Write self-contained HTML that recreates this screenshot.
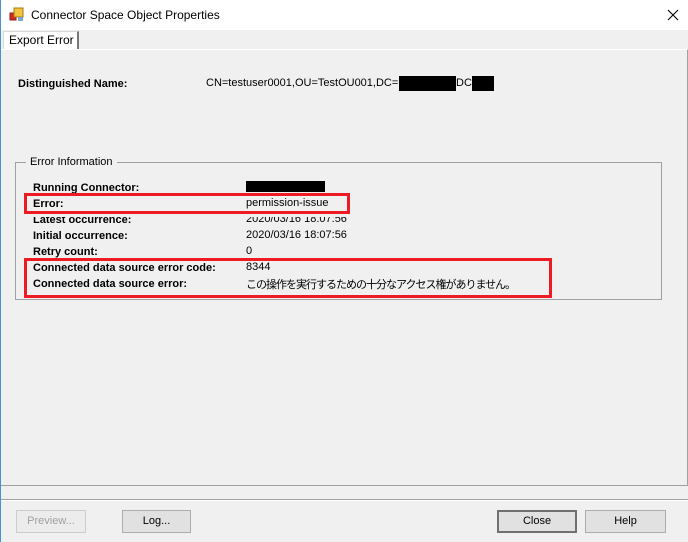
<!DOCTYPE html>
<html><head><style>
*{margin:0;padding:0;box-sizing:border-box}
body{width:688px;height:542px;background:#f0f0f0;position:relative;overflow:hidden;font-family:"Liberation Sans","Noto Sans CJK JP",sans-serif;font-size:12px;color:#000}
.a{position:absolute}
.b{font-weight:bold;font-size:11px;letter-spacing:0}
.v{font-size:11px;font-family:"Liberation Sans","Noto Sans CJK JP",sans-serif}
.btn{position:absolute;top:510px;height:23px;border:1px solid #adadad;background:#e1e1e1;text-align:center;line-height:21px;font-size:11px}
.blk{background:#000;position:absolute}
.red{position:absolute;border:3px solid #ed1c24}
</style></head><body>
<div class="a" style="left:0;top:0;width:688px;height:30px;background:#fff"></div>
<div class="a" style="left:0;top:0;width:1px;height:542px;background:#4a90d9"></div>
<svg class="a" style="left:9px;top:7px" width="16" height="16"><rect x="1" y="6" width="6" height="7" fill="#d22" stroke="#822"/><rect x="5" y="1" width="9" height="9" fill="#f3c43c" stroke="#a07a10"/><rect x="9" y="10" width="5" height="4" fill="#7aa7d8"/></svg>
<div class="a" style="left:31px;top:8px;font-size:12px">Connector Space Object Properties</div>
<svg class="a" style="left:667px;top:9px" width="12" height="12"><path d="M1 1L11 11M11 1L1 11" stroke="#000" stroke-width="1.1"/></svg>
<div class="a" style="left:3px;top:31px;width:76px;height:19px;background:#fff;border:1px solid #d9d9d9;border-bottom:none;border-right:2px solid #777"></div>
<div class="a" style="left:9px;top:33px;font-size:12px">Export Error</div>
<div class="a" style="left:1px;top:49px;width:687px;height:437px;border-top:1px solid #fff;border-right:1px solid #a0a0a0;border-bottom:1px solid #a0a0a0"></div>
<div class="a b" style="left:18px;top:78px">Distinguished Name:</div>
<div class="a v" style="left:206px;top:77px">CN=testuser0001,OU=TestOU001,DC=</div>
<div class="blk" style="left:399px;top:76px;width:57px;height:15px"></div>
<div class="a v" style="left:456px;top:77px">DC=</div>
<div class="blk" style="left:472px;top:76px;width:22px;height:15px"></div>
<div class="a" style="left:15px;top:162px;width:647px;height:138px;border:1px solid #a0a0a0"></div>
<div class="a" style="left:26px;top:156px;background:#f0f0f0;padding:0 4px;font-size:11px">Error Information</div>
<div class="a b" style="left:33px;top:182px">Running Connector:</div>
<div class="blk" style="left:246px;top:181px;width:79px;height:11px"></div>
<div class="a b" style="left:33px;top:198px">Error:</div>
<div class="a v" style="left:246px;top:197px">permission-issue</div>
<div class="a b" style="left:33px;top:214px;clip-path:inset(3px 0 0 0)">Latest occurrence:</div>
<div class="a v" style="left:246px;top:213px;clip-path:inset(4px 0 0 0)">2020/03/16 18:07:56</div>
<div class="a b" style="left:33px;top:230px">Initial occurrence:</div>
<div class="a v" style="left:246px;top:229px">2020/03/16 18:07:56</div>
<div class="a b" style="left:33px;top:246px">Retry count:</div>
<div class="a v" style="left:246px;top:245px">0</div>
<div class="a b" style="left:33px;top:262px">Connected data source error code:</div>
<div class="a v" style="left:246px;top:261px">8344</div>
<div class="a b" style="left:33px;top:278px">Connected data source error:</div>
<div class="a v" style="left:246px;top:276px;letter-spacing:-1px">この操作を実行するための十分なアクセス権がありません。</div>
<div class="red" style="left:24px;top:193px;width:326px;height:21px"></div>
<div class="red" style="left:24px;top:258px;width:528px;height:40px"></div>
<div class="a" style="left:1px;top:499px;width:687px;height:1px;background:#a0a0a0"></div>
<div class="a" style="left:1px;top:500px;width:687px;height:1px;background:#fff"></div>
<div class="btn" style="left:16px;width:70px;color:#a0a0a0;border-color:#ccc;background:#ececec">Preview...</div>
<div class="btn" style="left:122px;width:69px">Log...</div>
<div class="btn" style="left:497px;width:80px;border:2px solid #707070;line-height:19px">Close</div>
<div class="btn" style="left:585px;width:81px">Help</div>
</body></html>
